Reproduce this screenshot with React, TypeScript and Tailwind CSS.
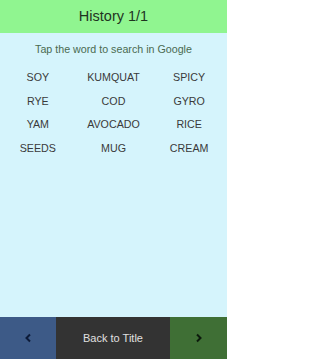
import React from "react";

const words = ["SOY","KUMQUAT","SPICY","RYE","COD","GYRO","YAM","AVOCADO","RICE","SEEDS","MUG","CREAM"];

export default function App() {
  return (
    <div className="w-[227px] h-[359px] flex flex-col bg-[#d5f4fc] overflow-hidden" style={{fontFamily: '"Liberation Sans", Arial, sans-serif'}}>
      <div className="h-[33px] bg-[#90f590] flex items-center justify-center text-[14.5px] text-[#1f331f]">History 1/1</div>
      <div className="mt-[8px] text-center text-[10.7px] text-[#4a6a50]">Tap the word to search in Google</div>
      <div className="mt-[13px] grid grid-cols-3 gap-y-[8.5px] text-[10.7px] text-[#3a3a3a]">
        {words.map((w) => (
          <div key={w} className="text-center leading-[15px]">{w}</div>
        ))}
      </div>
      <div className="flex-1" />
      <div className="h-[42px] flex">
        <div className="w-[56px] bg-[#3d5a87] flex items-center justify-center">
          <svg width="8" height="10" viewBox="0 0 8 10"><path d="M6 1.5 L2.5 5 L6 8.5" stroke="#0c1a38" strokeWidth="2" fill="none"/></svg>
        </div>
        <div className="flex-1 bg-[#333333] flex items-center justify-center text-[11px] text-[#e0e0e0]">Back to Title</div>
        <div className="w-[57px] bg-[#3f6f35] flex items-center justify-center">
          <svg width="8" height="10" viewBox="0 0 8 10"><path d="M2 1.5 L5.5 5 L2 8.5" stroke="#0c1a0c" strokeWidth="2" fill="none"/></svg>
        </div>
      </div>
    </div>
  );
}
